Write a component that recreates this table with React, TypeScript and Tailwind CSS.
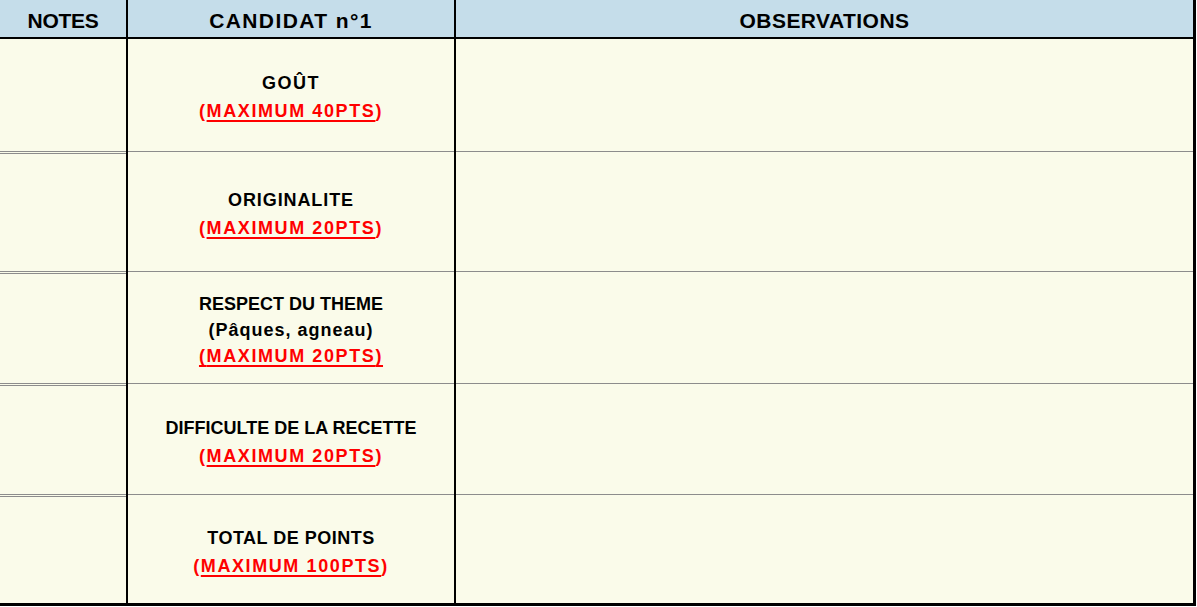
import React from "react";

const SEP = "border-[#8c8c8c]";

function Row({
  h,
  last,
  children,
}: {
  h: string;
  last?: boolean;
  children: React.ReactNode;
}) {
  return (
    <div className={`flex ${h}`}>
      <div className="w-[128px] flex flex-col border-r-2 border-black">
        <div className="flex-1" />
        {!last && <div className={`h-[3px] border-y ${SEP}`} />}
      </div>
      <div className="w-[328px] flex flex-col border-r-2 border-black">
        <div className="flex-1 flex flex-col items-center justify-center text-center pt-[3px]">
          {children}
        </div>
        {!last && <div className={`h-[3px] border-t ${SEP}`} />}
      </div>
      <div className="flex-1 flex flex-col">
        <div className="flex-1" />
        {!last && <div className={`h-[3px] border-t ${SEP}`} />}
      </div>
    </div>
  );
}

function Red({ text, full }: { text: string; full?: boolean }) {
  if (full) {
    return (
      <div className="text-[#ff0000] tracking-[1.6px] underline decoration-2 underline-offset-[3px] [text-decoration-skip-ink:none]">
        ({text})
      </div>
    );
  }
  return (
    <div className="text-[#ff0000] tracking-[1.6px]">
      (
      <span className="underline decoration-2 underline-offset-[3px] [text-decoration-skip-ink:none]">
        {text}
      </span>
      )
    </div>
  );
}

export default function App() {
  return (
    <div className="bg-white w-[1197px] h-[607px]">
      <div
        className="w-[1196px] h-[606px] border-r-[3px] border-b-[3px] border-black bg-[#fafbea] text-black font-bold flex flex-col"
        style={{ fontFamily: '"Liberation Sans", Arial, sans-serif' }}
      >
        {/* Header */}
        <div className="flex h-[39px] bg-[#c5ddea] border-b-2 border-black text-[21px] leading-[24px]">
          <div className="w-[128px] border-r-2 border-black flex items-center justify-center pt-[4px] tracking-[-0.3px]">
            NOTES
          </div>
          <div className="w-[328px] border-r-2 border-black flex items-center justify-center pt-[4px] tracking-[1.4px]">
            CANDIDAT n°1
          </div>
          <div className="flex-1 flex items-center justify-center pt-[4px] tracking-[0.45px]">
            OBSERVATIONS
          </div>
        </div>

        <div className="text-[18px] leading-[28px]">
          <Row h="h-[115px]">
            <div className="tracking-[1.5px]">GOÛT</div>
            <Red text="MAXIMUM 40PTS" />
          </Row>
          <Row h="h-[120px]">
            <div className="tracking-[0.9px]">ORIGINALITE</div>
            <Red text="MAXIMUM 20PTS" />
          </Row>
          <Row h="h-[112px]">
            <div className="leading-[26px] flex flex-col items-center">
              <div>RESPECT DU THEME</div>
              <div className="tracking-[1px]">(Pâques, agneau)</div>
              <Red text="MAXIMUM 20PTS" full />
            </div>
          </Row>
          <Row h="h-[111px]">
            <div>DIFFICULTE DE LA RECETTE</div>
            <Red text="MAXIMUM 20PTS" />
          </Row>
          <Row h="h-[106px]" last>
            <div className="tracking-[0.5px]">TOTAL DE POINTS</div>
            <Red text="MAXIMUM 100PTS" />
          </Row>
        </div>
      </div>
    </div>
  );
}
